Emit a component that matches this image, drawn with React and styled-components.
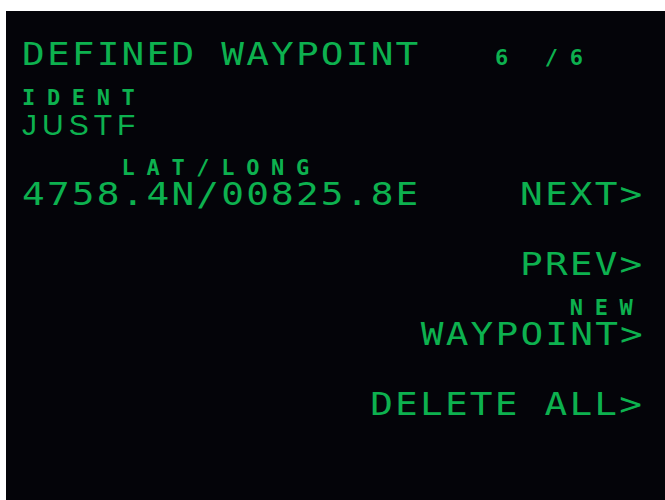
import React from 'react'
import styled, { createGlobalStyle } from 'styled-components'

const green = '#0db14f'

const GlobalStyle = createGlobalStyle`
  body {
    margin: 0;
    background: #fff;
  }
`

// CDU screen: 25 character cells of 24.9px per line
const Screen = styled.div`
  box-sizing: border-box;
  margin: 11px 0 0 6px;
  width: 659px;
  height: 489px;
  padding: 26px 20.5px 0 16px;
  background: #040409;
  color: ${green};
  font-family: "DejaVu Sans Mono", "Liberation Mono", monospace;
  overflow: hidden;
`

const DataLine = styled.div`
  box-sizing: border-box;
  display: flex;
  justify-content: space-between;
  align-items: baseline;
  height: 35px;
  padding-top: 4px;
  line-height: 27px;
  white-space: pre;
`

const LabelLine = styled.div`
  display: flex;
  justify-content: space-between;
  align-items: flex-end;
  height: 35px;
  line-height: 18px;
  white-space: pre;
`

// large glyphs are stretched a little so they fill their cell like the CDU font
const Big = styled.span`
  display: inline-block;
  font-size: 32px;
  letter-spacing: 1.84px;
  transform: scaleX(1.18);
  transform-origin: ${p => (p.$right ? 'right' : 'left')} center;
`

const Small = styled.span`
  font-size: 22px;
  font-weight: bold;
  letter-spacing: 11.66px;
`

const Ident = styled.span`
  font-family: "Liberation Sans", Arial, sans-serif;
  font-size: 30px;
  letter-spacing: 5px;
`

const App = () => (
  <>
    <GlobalStyle />
    <Screen>
      <DataLine>
        <Big>DEFINED WAYPOINT</Big>
        <Small>6 /6  </Small>
      </DataLine>
      <LabelLine>
        <Small>IDENT</Small>
      </LabelLine>
      <DataLine>
        <Ident>JUSTF</Ident>
      </DataLine>
      <LabelLine>
        <Small>    LAT/LONG</Small>
      </LabelLine>
      <DataLine>
        <Big>4758.4N/00825.8E</Big>
        <Big $right>NEXT&gt;</Big>
      </DataLine>
      <LabelLine />
      <DataLine>
        <span />
        <Big $right>PREV&gt;</Big>
      </DataLine>
      <LabelLine>
        <span />
        <Small>NEW</Small>
      </LabelLine>
      <DataLine>
        <span />
        <Big $right>WAYPOINT&gt;</Big>
      </DataLine>
      <LabelLine />
      <DataLine>
        <span />
        <Big $right>DELETE ALL&gt;</Big>
      </DataLine>
    </Screen>
  </>
)

export default App
